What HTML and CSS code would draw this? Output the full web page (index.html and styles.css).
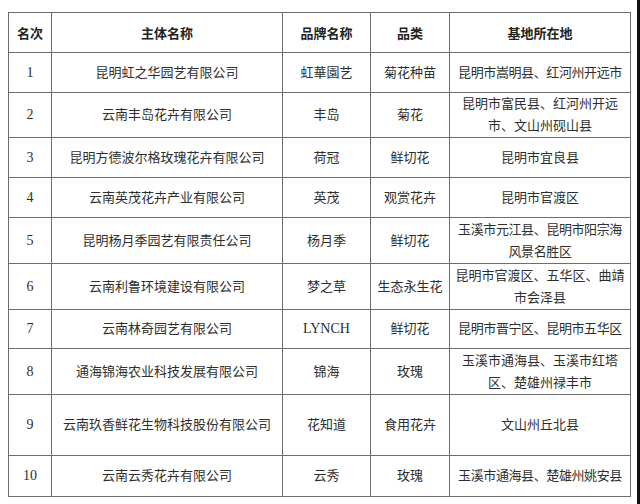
FILE: index.html
```html
<!DOCTYPE html>
<html lang="zh-CN">
<head>
<meta charset="utf-8">
<title>名单</title>
<link rel="stylesheet" href="styles.css">
</head>
<body>
<div class="page">
  <div class="sheet">
    <table class="list">
      <colgroup>
        <col class="c-rank"><col class="c-name"><col class="c-brand"><col class="c-cat"><col class="c-base">
      </colgroup>
      <thead>
        <tr class="h40"><th>名次</th><th>主体名称</th><th>品牌名称</th><th>品类</th><th>基地所在地</th></tr>
      </thead>
      <tbody>
        <tr class="h40"><td class="num">1</td><td>昆明虹之华园艺有限公司</td><td>虹華園艺</td><td>菊花种苗</td><td class="tight">昆明市嵩明县、红河州开远市</td></tr>
        <tr class="h45"><td class="num">2</td><td>云南丰岛花卉有限公司</td><td>丰岛</td><td>菊花</td><td class="wrap">昆明市富民县、红河州开远<br>市、文山州砚山县</td></tr>
        <tr class="h40"><td class="num">3</td><td>昆明方德波尔格玫瑰花卉有限公司</td><td>荷冠</td><td>鲜切花</td><td>昆明市宜良县</td></tr>
        <tr class="h40"><td class="num">4</td><td>云南英茂花卉产业有限公司</td><td>英茂</td><td>观赏花卉</td><td>昆明市官渡区</td></tr>
        <tr class="h46"><td class="num">5</td><td>昆明杨月季园艺有限责任公司</td><td>杨月季</td><td>鲜切花</td><td class="wrap tight">玉溪市元江县、昆明市阳宗海<br>风景名胜区</td></tr>
        <tr class="h46"><td class="num">6</td><td>云南利鲁环境建设有限公司</td><td>梦之草</td><td>生态永生花</td><td class="wrap">昆明市官渡区、五华区、曲靖<br>市会泽县</td></tr>
        <tr class="h39"><td class="num">7</td><td>云南林奇园艺有限公司</td><td class="num">LYNCH</td><td>鲜切花</td><td class="tight">昆明市晋宁区、昆明市五华区</td></tr>
        <tr class="h46"><td class="num">8</td><td>通海锦海农业科技发展有限公司</td><td>锦海</td><td>玫瑰</td><td class="wrap">玉溪市通海县、玉溪市红塔<br>区、楚雄州禄丰市</td></tr>
        <tr class="h61"><td class="num">9</td><td>云南玖香鲜花生物科技股份有限公司</td><td>花知道</td><td>食用花卉</td><td>文山州丘北县</td></tr>
        <tr class="h41"><td class="num">10</td><td>云南云秀花卉有限公司</td><td>云秀</td><td>玫瑰</td><td class="tight">玉溪市通海县、楚雄州姚安县</td></tr>
      </tbody>
    </table>
  </div>
  <div class="edge"></div>
</div>
</body>
</html>
```
FILE: styles.css
```css
html, body {
  margin: 0;
  padding: 0;
  background: #ffffff;
}
.page {
  display: flex;
  width: 640px;
  height: 504px;
}
.sheet {
  flex: 1;
  padding: 12px 0 0 8px;
}
.edge {
  width: 3px;
  background: #111111;
}
.list {
  border-collapse: collapse;
  table-layout: fixed;
  width: 622px;
  font-family: "Liberation Serif", "Noto Sans CJK SC", serif;
  font-size: 13px;
  color: #2e2e2e;
}
.c-rank { width: 43px; }
.c-name { width: 231px; }
.c-brand { width: 88px; }
.c-cat { width: 79px; }
.c-base { width: 181px; }
.list th,
.list td {
  border: 1px solid #6e6e6e;
  padding: 0 2px;
  text-align: center;
  vertical-align: middle;
  white-space: nowrap;
  line-height: 22px;
}
.list th {
  font-family: "Noto Sans CJK SC", sans-serif;
  font-weight: 700;
  color: #222222;
}
.list td.num {
  font-family: "Liberation Serif", serif;
  font-size: 14px;
}
.list td.tight {
  letter-spacing: -0.4px;
}
.h39 { height: 39px; }
.h40 { height: 40px; }
.h41 { height: 41px; }
.h45 { height: 45px; }
.h46 { height: 46px; }
.h61 { height: 61px; }
```
